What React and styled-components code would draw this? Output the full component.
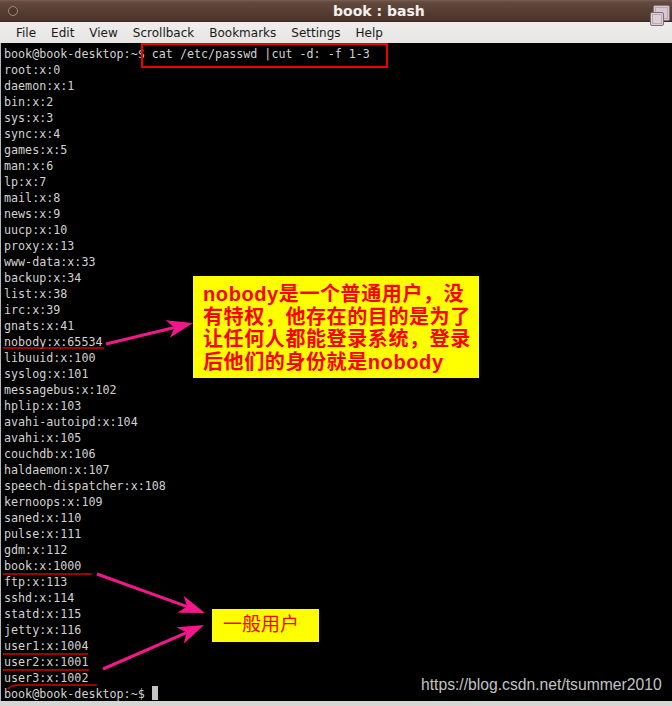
import React from 'react';
import styled, { createGlobalStyle } from 'styled-components';

const GlobalStyle = createGlobalStyle`
  html, body {
    margin: 0;
    padding: 0;
    background: #000;
  }
`;

const termLines = [
  'book@book-desktop:~$ cat /etc/passwd |cut -d: -f 1-3',
  'root:x:0', 'daemon:x:1', 'bin:x:2', 'sys:x:3', 'sync:x:4', 'games:x:5',
  'man:x:6', 'lp:x:7', 'mail:x:8', 'news:x:9', 'uucp:x:10', 'proxy:x:13',
  'www-data:x:33', 'backup:x:34', 'list:x:38', 'irc:x:39', 'gnats:x:41',
  'nobody:x:65534', 'libuuid:x:100', 'syslog:x:101', 'messagebus:x:102',
  'hplip:x:103', 'avahi-autoipd:x:104', 'avahi:x:105', 'couchdb:x:106',
  'haldaemon:x:107', 'speech-dispatcher:x:108', 'kernoops:x:109',
  'saned:x:110', 'pulse:x:111', 'gdm:x:112', 'book:x:1000', 'ftp:x:113',
  'sshd:x:114', 'statd:x:115', 'jetty:x:116', 'user1:x:1004',
  'user2:x:1001', 'user3:x:1002',
];

const menuItems = ['File', 'Edit', 'View', 'Scrollback', 'Bookmarks', 'Settings', 'Help'];

const noteLines = [
  'nobody是一个普通用户，没',
  '有特权，他存在的目的是为了',
  '让任何人都能登录系统，登录',
  '后他们的身份就是nobody',
];

const Window = styled.div`
  width: 672px;
  height: 706px;
  display: flex;
  flex-direction: column;
  background: #d8d8d6;
  overflow: hidden;
`;

const TitleBar = styled.div`
  position: relative;
  height: 22px;
  flex: none;
  display: flex;
  align-items: center;
  padding-left: 333px;
  box-sizing: border-box;
  background: linear-gradient(#7a5f55 0px, #634a3f 2px, #563d32 12px, #4b3329 22px);
  border-bottom: 1px solid #3a2820;
`;

const Grip = styled.span`
  position: absolute;
  left: 8px;
  top: 6px;
  width: 8px;
  height: 8px;
  border-radius: 50%;
  border: 1px solid #9a8a84;
  background: #4e372d;
`;

const Title = styled.span`
  font-family: "DejaVu Sans", sans-serif;
  font-weight: bold;
  font-size: 14px;
  color: #f4f0ee;
`;

const WinIcon = styled.svg`
  position: absolute;
  left: 648px;
  top: 3px;
  z-index: 2;
`;

const MenuBar = styled.div`
  height: 21px;
  flex: none;
  display: flex;
  align-items: center;
  gap: 15px;
  padding-left: 16px;
  background: linear-gradient(#efeeec, #e6e5e3);
`;

const MenuItem = styled.span`
  font-family: "DejaVu Sans", sans-serif;
  font-size: 12px;
  color: #1a1a1a;
`;

const Terminal = styled.div`
  position: relative;
  height: 658px;
  flex: none;
  box-sizing: border-box;
  padding: 3px 0 0 3px;
  background: #000;
  border-left: 1px solid #b8b8b8;
`;

const Line = styled.div`
  font-family: "DejaVu Sans Mono", monospace;
  font-size: 11.7px;
  line-height: 16px;
  height: 16px;
  color: #d2d2d2;
  white-space: pre;
`;

const Cursor = styled.span`
  display: inline-block;
  vertical-align: top;
  width: 6px;
  height: 14px;
  background: #c4c4c4;
`;

const Overlay = styled.svg`
  position: absolute;
  left: -1px;
  top: 0;
  pointer-events: none;
`;

const Note = styled.div`
  position: absolute;
  left: ${p => p.$left}px;
  top: ${p => p.$top}px;
  width: ${p => p.$width}px;
  height: ${p => p.$height}px;
  box-sizing: border-box;
  padding: ${p => p.$pad};
  background: #ffff00;
  color: #ff0000;
  font-family: "Liberation Sans", "Noto Sans CJK SC", sans-serif;
  font-size: ${p => p.$size}px;
  font-weight: ${p => (p.$bold ? 700 : 400)};
  line-height: ${p => p.$lh}px;
  letter-spacing: ${p => p.$spacing}px;
  white-space: pre;
`;

const Watermark = styled.div`
  position: absolute;
  left: 420px;
  bottom: 7px;
  font-family: "Liberation Sans", Arial, sans-serif;
  font-size: 15.7px;
  color: #c2c2c2;
`;

const BottomEdge = styled.div`
  flex: 1;
  background: #d6d6d4;
`;

function arrow(tail, tip, key) {
  const L = 26, W = 9, N = 7;
  const dx = tip[0] - tail[0];
  const dy = tip[1] - tail[1];
  const len = Math.hypot(dx, dy);
  const ux = dx / len, uy = dy / len;
  const nx = -uy, ny = ux;
  const bx = tip[0] - ux * L, by = tip[1] - uy * L;
  const mx = tip[0] - ux * (L - N), my = tip[1] - uy * (L - N);
  const pts = [
    [tip[0], tip[1]],
    [bx + nx * W, by + ny * W],
    [mx, my],
    [bx - nx * W, by - ny * W],
  ].map(p => p.join(',')).join(' ');
  return (
    <g key={key}>
      <line x1={tail[0]} y1={tail[1]} x2={mx} y2={my} stroke="#f2178a" strokeWidth="3" />
      <polygon points={pts} fill="#f2178a" />
    </g>
  );
}

export default function App() {
  return (
    <>
      <GlobalStyle />
      <Window>
        <TitleBar>
          <Grip />
          <Title>book : bash</Title>
          <WinIcon width="24" height="25" viewBox="0 0 24 25">
            <rect x="5.5" y="2.5" width="16" height="15" rx="1.5" fill="#d7c9d1" stroke="#86747f" />
            <rect x="7.5" y="4.5" width="12" height="11" fill="none" stroke="#b8a6b1" />
            <rect x="2.5" y="9.5" width="13" height="13" rx="1.5" fill="#dccfd6" stroke="#7d6b77" />
            <rect x="4.5" y="11.5" width="9" height="9" fill="none" stroke="#bcaab5" />
          </WinIcon>
        </TitleBar>
        <MenuBar>
          {menuItems.map(m => <MenuItem key={m}>{m}</MenuItem>)}
        </MenuBar>
        <Terminal>
          {termLines.map((l, i) => <Line key={i}>{l}</Line>)}
          <Line>book@book-desktop:~$ <Cursor /></Line>

          <Overlay width="672" height="658" viewBox="0 44 672 658">
            <rect x="142" y="45" width="245" height="23" fill="none" stroke="#ee0000" strokeWidth="2" />
            <g stroke="#d20000" strokeWidth="1.5" fill="none">
              <path d="M3 349 L104 349" />
              <path d="M3 575 L92 575" />
              <path d="M3 655 L88 655" />
              <path d="M3 671 L89 671" />
              <path d="M8 690 Q11 686 20 686 L97 686" />
            </g>
            {arrow([106, 345], [193, 324], 'a1')}
            {arrow([97, 575], [205, 614], 'a2')}
            {arrow([103, 670], [204, 626], 'a3')}
          </Overlay>

          <Note $left={192} $top={233} $width={286} $height={102} $pad="7px 0 0 10px" $size={20} $lh={22.5} $spacing={0.6} $bold>
            {noteLines.join('\n')}
          </Note>
          <Note $left={211} $top={566} $width={107} $height={33} $pad="5px 0 0 11px" $size={19} $lh={22} $spacing={0}>
            一般用户
          </Note>
          <Watermark>https://blog.csdn.net/tsummer2010</Watermark>
        </Terminal>
        <BottomEdge />
      </Window>
    </>
  );
}
